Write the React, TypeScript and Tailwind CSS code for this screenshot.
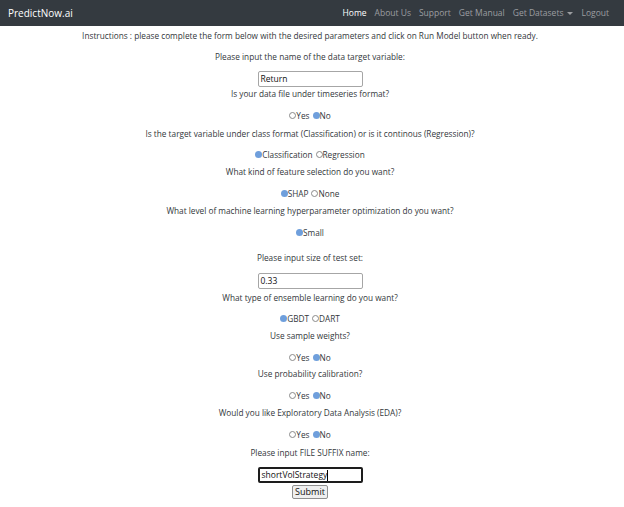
import React from 'react';

const font = { fontFamily: '"Open Sans", "Noto Sans", Arial, sans-serif' };

const Radio = ({ checked, label }: { checked: boolean; label: string }) => (
  <span className="inline-flex items-center">
    {checked ? (
      <span className="inline-block w-[7px] h-[7px] rounded-full bg-[#6f9fdc]" />
    ) : (
      <span className="inline-block w-[7px] h-[7px] rounded-full border border-[#8a8a8a] bg-white" />
    )}
    <span>{label}</span>
  </span>
);

const RadioRow = ({ items, className = '' }: { items: { label: string; checked: boolean }[]; className?: string }) => (
  <div className={`flex justify-center gap-[3px] h-[13px] leading-[13px] ${className}`}>
    {items.map((it) => (
      <Radio key={it.label} checked={it.checked} label={it.label} />
    ))}
  </div>
);

const Line = ({ children, className = '' }: { children: React.ReactNode; className?: string }) => (
  <div className={`h-[13px] leading-[13px] whitespace-nowrap ${className}`}>{children}</div>
);

const TextBox = ({ value, focused, className = '' }: { value: string; focused?: boolean; className?: string }) => (
  <div
    className={`w-[105px] h-[16px] mx-auto flex items-center px-[2px] bg-white rounded-[2px] text-left text-[8.5px] text-[#111] ${
      focused ? 'border-2 border-[#1d1d1d]' : 'border border-[#a6a6a6]'
    } ${className}`}
  >
    {value}
    {focused && <span className="inline-block w-px h-[11px] bg-black" />}
  </div>
);

export default function App() {
  const yesNo = [
    { label: 'Yes', checked: false },
    { label: 'No', checked: true },
  ];

  return (
    <div className="w-[624px] h-[507px] bg-white overflow-hidden" style={font}>
      <nav className="h-[26px] bg-[#343a40] flex items-center justify-between pl-[8px] pr-[15px]">
        <span className="text-white text-[10px]">PredictNow.ai</span>
        <ul className="flex items-center gap-[8px] text-[8.5px] text-[#9c9ea1]">
          <li className="text-white">Home</li>
          <li>About Us</li>
          <li>Support</li>
          <li>Get Manual</li>
          <li className="flex items-center gap-[4px]">
            Get Datasets
            <span className="inline-block w-0 h-0 border-l-[3px] border-r-[3px] border-t-[3px] border-l-transparent border-r-transparent border-t-[#9c9ea1]" />
          </li>
          <li>Logout</li>
        </ul>
      </nav>

      <div className="w-[620px] flex flex-col items-center text-center text-[8.25px] text-[#33373b]">
        <Line className="mt-[3px]">
          Instructions : please complete the form below with the desired parameters and click on Run Model button when ready.
        </Line>
        <Line className="mt-[8px]">Please input the name of the data target variable:</Line>
        <TextBox value="Return" className="mt-[8px]" />
        <Line>Is your data file under timeseries format?</Line>
        <RadioRow items={yesNo} className="mt-[9px]" />
        <Line className="mt-[5px]">
          Is the target variable under class format (Classification) or is it continous (Regression)?
        </Line>
        <RadioRow
          className="mt-[8px]"
          items={[
            { label: 'Classification', checked: true },
            { label: 'Regression', checked: false },
          ]}
        />
        <Line className="mt-[4px]">What kind of feature selection do you want?</Line>
        <RadioRow
          className="mt-[9px]"
          items={[
            { label: 'SHAP', checked: true },
            { label: 'None', checked: false },
          ]}
        />
        <Line className="mt-[4px]">What level of machine learning hyperparameter optimization do you want?</Line>
        <RadioRow className="mt-[9px]" items={[{ label: 'Small', checked: true }]} />
        <Line className="mt-[12px]">Please input size of test set:</Line>
        <TextBox value="0.33" className="mt-[9px]" />
        <Line className="mt-[2px]">What type of ensemble learning do you want?</Line>
        <RadioRow
          className="mt-[8px]"
          items={[
            { label: 'GBDT', checked: true },
            { label: 'DART', checked: false },
          ]}
        />
        <Line className="mt-[4px]">Use sample weights?</Line>
        <RadioRow items={yesNo} className="mt-[9px]" />
        <Line className="mt-[3px]">Use probability calibration?</Line>
        <RadioRow items={yesNo} className="mt-[9px]" />
        <Line className="mt-[4px]">Would you like Exploratory Data Analysis (EDA)?</Line>
        <RadioRow items={yesNo} className="mt-[9px]" />
        <Line className="mt-[5px]">Please input FILE SUFFIX name:</Line>
        <TextBox value="shortVolStrategy" focused className="mt-[8px] h-[15px]" />
        <button className="mt-[2px] h-[14px] px-[2px] leading-[12px] text-[9px] text-[#111] bg-[#efefef] border border-[#8f8f8f] rounded-[2px]">
          Submit
        </button>
      </div>
    </div>
  );
}
